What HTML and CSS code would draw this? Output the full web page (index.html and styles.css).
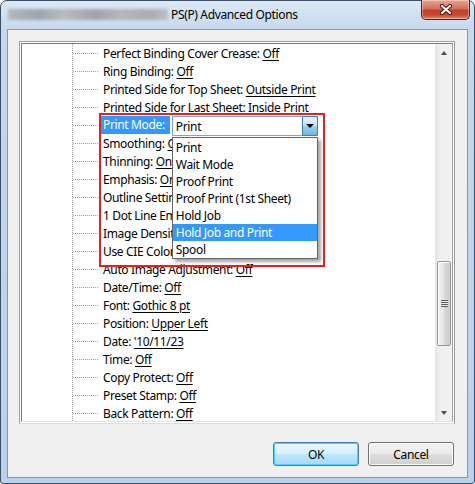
FILE: index.html
```html
<!DOCTYPE html>
<html lang="en">
<head>
  <meta charset="UTF-8">
  <title>PS(P) Advanced Options</title>
  <link rel="stylesheet" href="styles.css">
</head>
<body>

  <div class="window">
    <div class="titlebar">
      <span class="blurred"></span>
      <span class="title">PS(P) Advanced Options</span>
      <div class="close-btn">
        <svg width="14" height="11" viewBox="0 0 14 11">
          <path d="M3 2 L11 9 M11 2 L3 9" stroke="#4a1510" stroke-width="4.2" stroke-linecap="round"/>
          <path d="M3 2 L11 9 M11 2 L3 9" stroke="#fff" stroke-width="2.2" stroke-linecap="round"/>
        </svg>
      </div>
    </div>

    <div class="client">
      <div class="tree">
        <div class="tree-view">
          <div class="rows">
            <div class="row">Perfect Binding Cover Crease:&nbsp;<u>Off</u></div>
            <div class="row">Ring Binding:&nbsp;<u>Off</u></div>
            <div class="row">Printed Side for Top Sheet:&nbsp;<u>Outside Print</u></div>
            <div class="row">Printed Side for Last Sheet:&nbsp;<u>Inside Print</u></div>
            <div class="row selected">
              <span class="label">Print Mode:</span>
              <div class="combo">
                <span class="combo-value">Print</span>
                <span class="combo-arrow"></span>
                <ul class="dropdown">
                  <li>Print</li>
                  <li>Wait Mode</li>
                  <li>Proof Print</li>
                  <li>Proof Print (1st Sheet)</li>
                  <li>Hold Job</li>
                  <li class="active">Hold Job and Print</li>
                  <li>Spool</li>
                </ul>
              </div>
            </div>
            <div class="row">Smoothing:&nbsp;<u>Off</u></div>
            <div class="row">Thinning:&nbsp;<u>On</u></div>
            <div class="row">Emphasis:&nbsp;<u>On</u></div>
            <div class="row">Outline Settings:&nbsp;<u>Off</u></div>
            <div class="row">1 Dot Line Emphasis:&nbsp;<u>Off</u></div>
            <div class="row">Image Density:&nbsp;<u>3</u></div>
            <div class="row">Use CIE Color:&nbsp;<u>Off</u></div>
            <div class="row">Auto Image Adjustment:&nbsp;<u>Off</u></div>
            <div class="row">Date/Time:&nbsp;<u>Off</u></div>
            <div class="row">Font:&nbsp;<u>Gothic 8 pt</u></div>
            <div class="row">Position:&nbsp;<u>Upper Left</u></div>
            <div class="row">Date:&nbsp;<u>'10/11/23</u></div>
            <div class="row">Time:&nbsp;<u>Off</u></div>
            <div class="row">Copy Protect:&nbsp;<u>Off</u></div>
            <div class="row">Preset Stamp:&nbsp;<u>Off</u></div>
            <div class="row">Back Pattern:&nbsp;<u>Off</u></div>
            <div class="callout"></div>
          </div>
          <div class="scrollbar">
            <div class="scroll-btn"><span class="tri-up"></span></div>
            <div class="track"><div class="thumb"><span class="grip"></span></div></div>
            <div class="scroll-btn"><span class="tri-down"></span></div>
          </div>
        </div>
      </div>

      <div class="buttons">
        <button class="btn default">OK</button>
        <button class="btn">Cancel</button>
      </div>
    </div>
  </div>

</body>
</html>
```

FILE: styles.css
```css
* {
  margin: 0;
  padding: 0;
  box-sizing: border-box;
}
body {
  font-family: 'Noto Sans', 'DejaVu Sans', sans-serif;
  font-size: 12px;
  letter-spacing: -0.35px;
  color: #000;
  background: #fff;
  width: 475px;
  height: 484px;
  overflow: hidden;
}
.window {
  width: 475px;
  height: 484px;
  border: 1px solid #3b4e66;
  border-radius: 7px 7px 3px 3px;
  background: linear-gradient(#dce8f5, #c4d8ee 30px, #b9d1ea);
  padding: 0 6px 5px 6px;
  display: flex;
  flex-direction: column;
  position: relative;
}
.titlebar {
  height: 28px;
  display: flex;
  align-items: center;
  padding-bottom: 2px;
}
.blurred {
  width: 160px;
  height: 11px;
  margin-left: 1px;
  background: linear-gradient(90deg, #b3b8be, #9da4ab 20%, #b8bcc2 35%, #a3a0ab 55%, #b4b8be 70%, #a9adb3 90%, #bcc2c9);
  filter: blur(1.5px);
}
.title {
  margin-left: 3px;
}
.close-btn {
  position: absolute;
  top: -1px;
  right: 4px;
  width: 49px;
  height: 20px;
  border: 1px solid #5a2119;
  border-top: none;
  border-radius: 0 0 5px 5px;
  background: linear-gradient(#e8a493, #d4705c 45%, #c0422c 55%, #c94b31 80%, #e2876a);
  box-shadow: inset 0 0 0 1px rgba(255, 255, 255, 0.35);
  display: flex;
  align-items: center;
  justify-content: center;
}
.client {
  flex: 1;
  border: 1px solid #8297b0;
  background: #f0f0f0;
  padding: 11px 12px 11px 11px;
  display: flex;
  flex-direction: column;
}
.tree {
  height: 383px;
  border: 1px solid #a0a0a0;
  border-right-color: #9b9b9b;
  border-bottom-color: #dcdcdc;
  background: #fff;
  padding: 1px;
}
.tree-view {
  height: 100%;
  border: 1px solid #7a7a7a;
  border-right-color: #a0a0a0;
  border-bottom-color: #e3e3e3;
  display: flex;
}
.rows {
  flex: 1;
  position: relative;
  overflow: hidden;
}
.rows::before {
  content: '';
  position: absolute;
  left: 50px;
  top: 0;
  bottom: 0;
  border-left: 1px dotted #a0a0a0;
}
.row {
  height: 18px;
  display: flex;
  align-items: center;
  padding-left: 81px;
  white-space: nowrap;
  position: relative;
}
.row::before {
  content: '';
  position: absolute;
  left: 51px;
  top: 9px;
  width: 25px;
  border-top: 1px dotted #a0a0a0;
}
.row u {
  text-decoration-thickness: 1px;
  text-underline-offset: 2px;
}
.row.selected {
  align-items: flex-start;
}
.row.selected .label {
  height: 18px;
  line-height: 18px;
  margin-left: -3px;
  padding: 0 5px 0 3px;
  background: #3399ff;
  color: #fff;
}
.combo {
  position: relative;
  z-index: 2;
  width: 146px;
  height: 20px;
  margin-left: 2px;
  border: 1px solid #7aa7d2;
  background: #fff;
  display: flex;
  align-items: center;
}
.combo-value {
  flex: 1;
  padding-left: 3px;
}
.combo-arrow {
  width: 16px;
  height: 20px;
  margin: -1px -1px -1px 0;
  border: 1px solid #3c7fb1;
  border-radius: 0 2px 2px 0;
  background: linear-gradient(#e5f4fc, #c4e5f6 50%, #98d1ef 51%, #6cb9e3);
  position: relative;
}
.combo-arrow::after {
  content: '';
  position: absolute;
  left: 3px;
  top: 7px;
  border-left: 4px solid transparent;
  border-right: 4px solid transparent;
  border-top: 4px solid #000;
}
.dropdown {
  list-style: none;
  position: absolute;
  left: -1px;
  top: 20px;
  width: 146px;
  height: 122px;
  border: 1px solid #646464;
  background: #fff;
  padding-top: 1px;
  box-shadow: 3px 3px 3px rgba(0, 0, 0, 0.35);
}
.dropdown li {
  height: 17px;
  line-height: 17px;
  padding-left: 3px;
}
.dropdown li.active {
  background: #3399ff;
  color: #fff;
}
.callout {
  position: absolute;
  z-index: 3;
  left: 77px;
  top: 69px;
  width: 226px;
  height: 154px;
  border: 2px solid #ee1c1c;
}
.scrollbar {
  width: 17px;
  display: flex;
  flex-direction: column;
  background: linear-gradient(90deg, #e5e5e5, #f0f0f0 30%, #f2f2f2);
}
.scroll-btn {
  height: 17px;
  display: flex;
  align-items: center;
  justify-content: center;
}
.tri-up, .tri-down {
  border-left: 3.5px solid transparent;
  border-right: 3.5px solid transparent;
}
.tri-up {
  border-bottom: 4px solid #4d4d4d;
}
.tri-down {
  border-top: 4px solid #4d4d4d;
}
.track {
  flex: 1;
}
.thumb {
  margin: 200px 1px 0 2px;
  height: 85px;
  border: 1px solid #979797;
  border-radius: 2px;
  background: linear-gradient(90deg, #f1f1f1, #e6e6e6 50%, #d6d6d6 51%, #cfcfcf);
  box-shadow: inset 1px 1px 0 #fff;
  display: flex;
  align-items: center;
  justify-content: center;
}
.grip {
  width: 7px;
  height: 7px;
  background: repeating-linear-gradient(#5e5e5e 0 1px, #e8e8e8 1px 2px);
}
.buttons {
  margin-top: 18px;
  padding-right: 1px;
  display: flex;
  justify-content: flex-end;
  gap: 9px;
}
.btn {
  width: 86px;
  height: 24px;
  font-family: inherit;
  font-size: 12px;
  letter-spacing: inherit;
  color: #000;
  border: 1px solid #707070;
  border-radius: 3px;
  background: linear-gradient(#f2f2f2, #ebebeb 50%, #dddddd 51%, #cfcfcf);
  box-shadow: inset 0 0 0 1px #fcfcfc;
}
.btn.default {
  border-color: #3c7fb1;
  background: linear-gradient(#eaf6fd, #d9f0fc 50%, #bee6fd 51%, #a7d9f5);
  box-shadow: inset 0 0 0 1px #48d5fb;
}
```
